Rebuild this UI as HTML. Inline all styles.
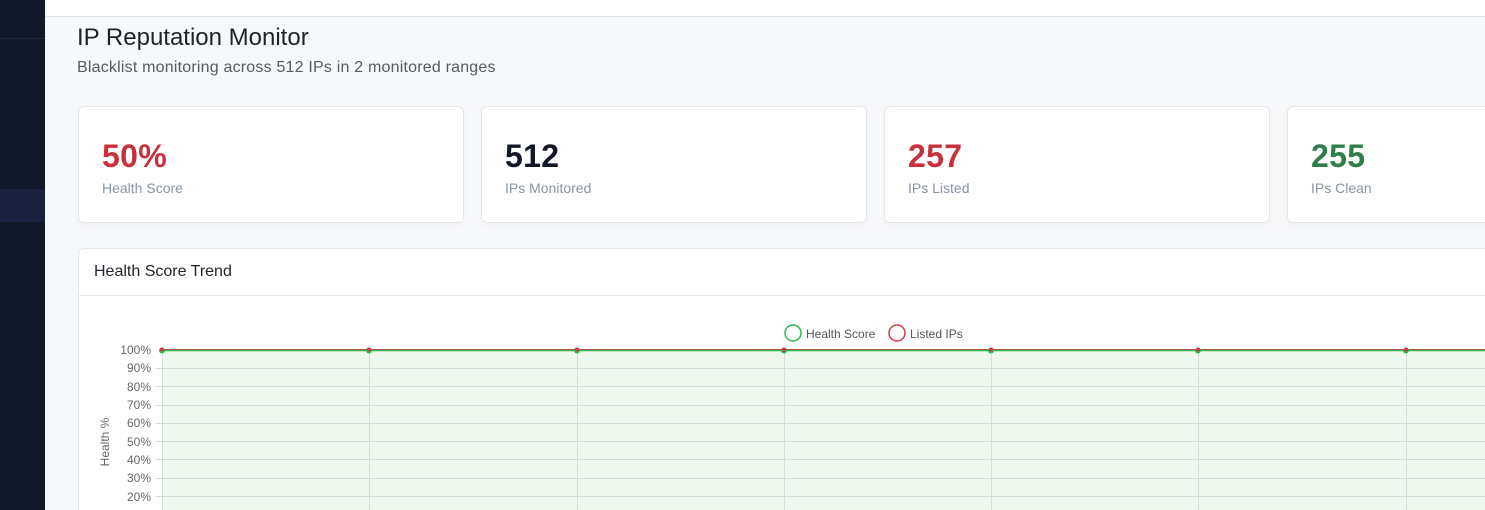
<!DOCTYPE html>
<html><head><style>
html,body{margin:0;width:1485px;height:510px;overflow:hidden}
body{background:#f7f8fa;font-family:"Liberation Sans",sans-serif;position:relative}
.side{position:absolute;left:0;top:0;width:45px;height:510px;background:#111827}
.side .l{position:absolute;top:38px;left:0;width:45px;height:1px;background:#1f2937}
.side .a{position:absolute;top:189px;left:0;width:45px;height:33px;background:#1b2240}
.top{position:absolute;left:45px;top:0;right:0;height:16px;background:#fff;border-bottom:1px solid #dde2ec}
h1{position:absolute;left:77px;top:24px;margin:0;font-size:24px;font-weight:400;color:#1f2328}
.sub{position:absolute;left:77px;top:59px;font-size:16px;color:#555b63;letter-spacing:.2px}
.card{position:absolute;top:106px;width:384px;height:115px;background:#fff;border:1px solid #e3e6ec;border-radius:6px;box-shadow:0 2px 6px rgba(0,0,0,.03)}
.card b{position:absolute;left:23px;top:31px;font-size:32px;font-weight:700;letter-spacing:.3px}
.card span{position:absolute;left:23px;top:73px;font-size:14px;color:#8a93a6}
.chart{position:absolute;left:78px;top:248px;width:1420px;height:270px;background:#fff;border:1px solid #e3e6ec;border-radius:6px}
.chart .h{height:46px;border-bottom:1px solid #e3e6ec;font-size:16px;color:#1f2328;line-height:46px;padding-left:15px}
</style></head><body>
<div class="side"><div class="l"></div><div class="a"></div></div>
<div class="top"></div>
<h1>IP Reputation Monitor</h1>
<div class="sub">Blacklist monitoring across 512 IPs in 2 monitored ranges</div>
<div class="card" style="left:78px"><b style="color:#c8303c">50%</b><span>Health Score</span></div>
<div class="card" style="left:481px"><b style="color:#111827">512</b><span>IPs Monitored</span></div>
<div class="card" style="left:884px"><b style="color:#c8303c">257</b><span>IPs Listed</span></div>
<div class="card" style="left:1287px"><b style="color:#2e7d4a">255</b><span>IPs Clean</span></div>
<div class="chart"><div class="h">Health Score Trend</div></div>
<svg style="position:absolute;left:0;top:0" width="1485" height="510" font-family="Liberation Sans, sans-serif">
<circle cx="793" cy="333" r="8" fill="none" stroke="#2eb84a" stroke-width="1.5"/>
<text x="806" y="338" font-size="12" fill="#555">Health Score</text>
<circle cx="897" cy="333" r="8" fill="none" stroke="#d9364a" stroke-width="1.5"/>
<text x="910" y="338" font-size="12" fill="#555">Listed IPs</text>
<rect x="162" y="350" width="1330" height="170" fill="#eff8ee"/>
<g stroke="#d8dcd8" stroke-width="1">
<line x1="156" x2="1485" y1="368.5" y2="368.5"/><line x1="156" x2="1485" y1="386.5" y2="386.5"/><line x1="156" x2="1485" y1="405.5" y2="405.5"/><line x1="156" x2="1485" y1="423.5" y2="423.5"/><line x1="156" x2="1485" y1="441.5" y2="441.5"/><line x1="156" x2="1485" y1="459.5" y2="459.5"/><line x1="156" x2="1485" y1="478.5" y2="478.5"/><line x1="156" x2="1485" y1="496.5" y2="496.5"/>
<line x1="162.5" x2="162.5" y1="350" y2="510"/><line x1="369.5" x2="369.5" y1="350" y2="510"/><line x1="577.5" x2="577.5" y1="350" y2="510"/><line x1="784.5" x2="784.5" y1="350" y2="510"/><line x1="991.5" x2="991.5" y1="350" y2="510"/><line x1="1198.5" x2="1198.5" y1="350" y2="510"/><line x1="1406.5" x2="1406.5" y1="350" y2="510"/>
</g>
<line x1="162" x2="1485" y1="349.5" y2="349.5" stroke="#d9364a" stroke-width="1"/>
<line x1="162" x2="1485" y1="350.5" y2="350.5" stroke="#2eb84a" stroke-width="1.5"/>
<g fill="#2eb84a"><circle cx="162" cy="350.5" r="3"/><circle cx="369" cy="350.5" r="3"/><circle cx="577" cy="350.5" r="3"/><circle cx="784" cy="350.5" r="3"/><circle cx="991" cy="350.5" r="3"/><circle cx="1198" cy="350.5" r="3"/><circle cx="1406" cy="350.5" r="3"/></g>
<g fill="#d9364a"><circle cx="162" cy="349.5" r="2"/><circle cx="369" cy="349.5" r="2"/><circle cx="577" cy="349.5" r="2"/><circle cx="784" cy="349.5" r="2"/><circle cx="991" cy="349.5" r="2"/><circle cx="1198" cy="349.5" r="2"/><circle cx="1406" cy="349.5" r="2"/></g>
<g font-size="12" fill="#666" text-anchor="end">
<text x="151" y="354">100%</text><text x="151" y="372">90%</text><text x="151" y="391">80%</text><text x="151" y="409">70%</text><text x="151" y="427">60%</text><text x="151" y="446">50%</text><text x="151" y="464">40%</text><text x="151" y="482">30%</text><text x="151" y="501">20%</text>
</g>
<text transform="translate(109,442) rotate(-90)" font-size="12" fill="#666" text-anchor="middle">Health %</text>
</svg>
</body></html>
